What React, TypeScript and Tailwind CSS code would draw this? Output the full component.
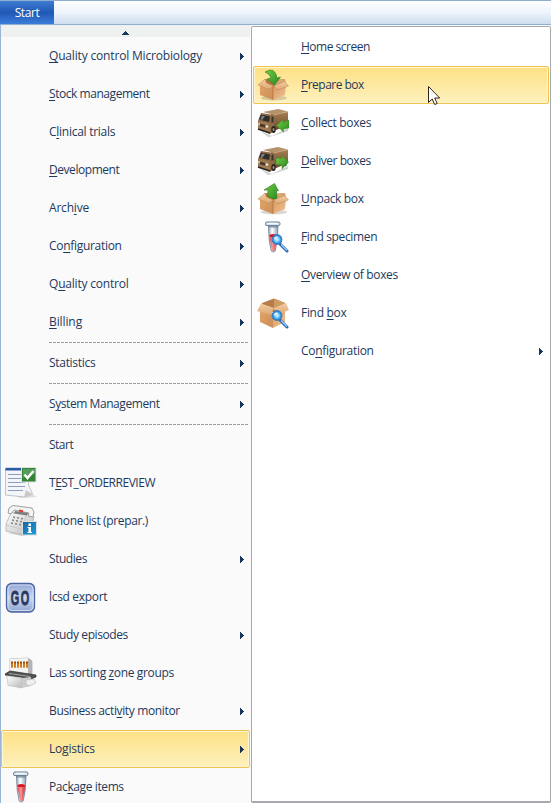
import type { ReactNode } from "react";

type IconName = "order" | "phone" | "go" | "sorter" | "tube" | "pack" | "collect" | "deliver" | "unpack" | "specimen" | "findbox";
type Item = { label: string; icon?: IconName; sub?: boolean; active?: boolean; divider?: boolean; tracking?: string };

// An ampersand precedes the access key of each label.
const mainItems: Item[] = [
  { label: "&Quality control Microbiology", sub: true, tracking: "tracking-[-0.17px]" },
  { label: "&Stock management", sub: true, tracking: "tracking-[-0.45px]" },
  { label: "C&linical trials", sub: true, tracking: "tracking-[-0.27px]" },
  { label: "&Development", sub: true, tracking: "tracking-[-0.45px]" },
  { label: "Arch&ive", sub: true },
  { label: "Co&nfiguration", sub: true, tracking: "tracking-[-0.3px]" },
  { label: "Q&uality control", sub: true },
  { label: "&Billing", sub: true, divider: true, tracking: "tracking-[-0.1px]" },
  { label: "Statistics", sub: true, divider: true, tracking: "tracking-[-0.3px]" },
  { label: "S&ystem Management", sub: true, divider: true, tracking: "tracking-[-0.43px]" },
  { label: "Start", tracking: "tracking-[-0.5px]" },
  { label: "T&EST_ORDERREVIEW", icon: "order", tracking: "tracking-[-0.47px]" },
  { label: "Phone list (prepar.)", icon: "phone", tracking: "tracking-[-0.37px]" },
  { label: "Studies", sub: true, tracking: "tracking-[-0.45px]" },
  { label: "lcsd e&xport", icon: "go", tracking: "tracking-[-0.32px]" },
  { label: "Study episodes", sub: true, tracking: "tracking-[-0.4px]" },
  { label: "Las sorting &zone groups", icon: "sorter", tracking: "tracking-[-0.36px]" },
  { label: "Business acti&vity monitor", sub: true, tracking: "tracking-[-0.36px]" },
  { label: "Lo&gistics", sub: true, active: true },
  { label: "Pac&kage items", icon: "tube", tracking: "tracking-[-0.4px]" },
];

const logisticsItems: Item[] = [
  { label: "&Home screen", tracking: "tracking-[-0.5px]" },
  { label: "&Prepare box", icon: "pack", active: true, tracking: "tracking-[-0.52px]" },
  { label: "&Collect boxes", icon: "collect", tracking: "tracking-[-0.3px]" },
  { label: "&Deliver boxes", icon: "deliver", tracking: "tracking-[-0.45px]" },
  { label: "&Unpack box", icon: "unpack", tracking: "tracking-[-0.35px]" },
  { label: "&Find specimen", icon: "specimen", tracking: "tracking-[-0.36px]" },
  { label: "&Overview of boxes", tracking: "tracking-[-0.35px]" },
  { label: "Find &box", icon: "findbox", tracking: "tracking-[-0.3px]" },
  { label: "Co&nfiguration", sub: true, tracking: "tracking-[-0.3px]" },
];

function Gradients() {
  return (
    <svg className="absolute size-0" aria-hidden="true">
      <defs>
        <linearGradient id="boxL" x1="0" y1="0" x2="1" y2="1"><stop stopColor="#e2a468" /><stop offset="1" stopColor="#c98d56" /></linearGradient>
        <linearGradient id="boxR" x1="0" y1="0" x2="1" y2="1"><stop stopColor="#d89a62" /><stop offset="1" stopColor="#f0c296" /></linearGradient>
        <linearGradient id="flap" x1="0" y1="0" x2="0" y2="1"><stop stopColor="#f3cda3" /><stop offset="1" stopColor="#dda873" /></linearGradient>
        <linearGradient id="green" x1="0" y1="0" x2="1" y2="1"><stop stopColor="#7acb4a" /><stop offset="1" stopColor="#228a1a" /></linearGradient>
        <linearGradient id="truck" x1="0" y1="0" x2="0" y2="1"><stop stopColor="#a37d53" /><stop offset="1" stopColor="#6a4a2b" /></linearGradient>
        <linearGradient id="glass" x1="0" y1="0" x2="1" y2="0"><stop stopColor="#9eb1c3" /><stop offset=".4" stopColor="#fff" /><stop offset="1" stopColor="#8aa0b6" /></linearGradient>
        <linearGradient id="blood" x1="0" y1="0" x2="1" y2="0"><stop stopColor="#e04a50" /><stop offset=".45" stopColor="#fa9495" /><stop offset="1" stopColor="#cb2830" /></linearGradient>
        <radialGradient id="lens"><stop stopColor="#e8fcff" /><stop offset=".55" stopColor="#5fc3f6" /><stop offset="1" stopColor="#1a6fd0" /></radialGradient>
        <linearGradient id="metal" x1="0" y1="0" x2="1" y2="1"><stop stopColor="#fff" /><stop offset="1" stopColor="#b9b9b9" /></linearGradient>
        <linearGradient id="goface" x1="0" y1="0" x2="0" y2="1"><stop stopColor="#8fa5d3" /><stop offset=".5" stopColor="#ccd8ee" /><stop offset="1" stopColor="#8da4d2" /></linearGradient>
        <linearGradient id="info" x1="0" y1="0" x2="1" y2="1"><stop stopColor="#1d629d" /><stop offset="1" stopColor="#19a0df" /></linearGradient>
      </defs>
    </svg>
  );
}

function Box({ children }: { children?: ReactNode }) {
  return (
    <>
      <ellipse cx="17" cy="29" rx="13" ry="2.500" fill="#5c4a36" opacity=".22" />
      <path d="m8 10 10 1 10-1-3 8H8z" fill="#b9763f" />
      <path d="m18 11 10-1 1 4-11 3z" fill="#dba671" />
      {children}
      <path d="m3 16 13 2v13L3 26z" fill="url(#boxL)" />
      <path d="m16 18 13-2-1 10-12 5z" fill="url(#boxR)" />
      <path d="m8 10-7 6 11 4.500 4.500-3.500-7-3z" fill="url(#flap)" stroke="#b07440" strokeWidth=".4" />
      <path d="m16.500 17 11-4.500 4 4.500-11 4z" fill="url(#flap)" stroke="#b07440" strokeWidth=".4" />
      <path d="M16 18v12.500" stroke="#a9642d" strokeWidth=".6" />
    </>
  );
}

function Truck({ children }: { children: ReactNode }) {
  return (
    <>
      <path d="m2 23 13 6 16-8v3l-15 5-5 1z" fill="#444" opacity=".25" />
      <path d="m14 7 17-2v13l-14 6z" fill="url(#truck)" />
      <path d="m6 5 15-3 10 2.500L17 8z" fill="#b4926a" />
      <path d="m17 8 14-3.500" stroke="#d0b28b" strokeWidth=".7" />
      <path d="m4 6 13 2v16l-4 3L1 22v-8z" fill="#8d6b47" />
      <path d="m4 7.500 9 2-1 5.500-10-2.500z" fill="#2f2e2d" />
      <path d="m5 8.500 3 .7-3 3.800-1.500-.4z" fill="#81827e" />
      <path d="m14.500 10 2-.5V15l-2 1z" fill="#39342e" />
      <path d="m1 14 11 2.500 1 9-11.500-3.500z" fill="#a07c55" />
      <path d="m3 16.500 5 1.300v3L3 19.500z" fill="#4b3a2a" />
      <path d="m1.500 17 1 .3m6.500 2 2 .6" stroke="#fff3cf" strokeWidth="2" />
      <path d="m1 22 12 4" stroke="#2b2520" strokeWidth="1.800" />
      <ellipse cx="16.500" cy="22.500" rx="2.200" ry="3.500" fill="#28241f" />
      <ellipse cx="16.500" cy="22.500" rx=".9" ry="1.600" fill="#ae9a83" />
      <ellipse cx="28" cy="18.500" rx="1.800" ry="2.800" fill="#302820" />
      {children}
    </>
  );
}

function Tube() {
  return (
    <>
      <path d="M11.500 5h9.500l-.8 14-2 11q-2 2-4 0l-2-11z" fill="url(#glass)" stroke="#647990" strokeWidth=".8" />
      <path d="M12.500 14h7.500l-.4 5-2 10.500q-1.300 1.300-2.600 0L13 19z" fill="url(#blood)" />
      <ellipse cx="16.200" cy="14.500" rx="3.700" ry="1.600" fill="#d9131f" />
      <rect x="8.500" y="1" width="14.500" height="3.600" rx="1.500" fill="#dbe6f0" stroke="#546c85" strokeWidth=".9" />
      <path d="M11 2.300h9" stroke="#fff" />
      <path d="M12 6h8.500" stroke="#7188a0" />
    </>
  );
}

function Magnifier() {
  return (
    <>
      <path d="m23 23 7 7" stroke="#2b65b2" strokeWidth="3" strokeLinecap="round" />
      <path d="m24 23.500 6 6" stroke="#9bd5ff" strokeWidth="1.100" />
      <circle cx="20" cy="18.500" r="4.800" fill="url(#lens)" stroke="#3c7cc0" strokeWidth="1.200" />
      <path d="M17 18.500q0-3 3-3 2 1-1 2z" fill="#fff" opacity=".85" />
    </>
  );
}

const drawings: Record<IconName, ReactNode> = {
  order: (
    <>
      <path d="m10 29 17-2 5 3-17 1z" fill="#aaa" opacity=".35" />
      <path d="M.5 2h22l1 16 4 9-8 3L.5 28z" fill="#f3f5f9" stroke="#a9adb6" strokeWidth=".7" />
      <path d="m19 30 2-7 6 4q-3 3-8 3z" fill="#c9c9c9" />
      <path d="M.5 3.500V.8H18v2.700z" fill="#2a5ca5" />
      <path d="M3 7.500h13M3 11.500h13M3 15.500h17M3 19.500h17M3 23.500h15" stroke="#8b9ec1" />
      <rect x="16.500" y=".5" width="14.500" height="14.500" fill="#358337" stroke="#dfe3df" />
      <path d="M18 2h12v5q-6 1-12 4z" fill="#69a86c" opacity=".65" />
      <path d="m19.500 7.500 3 3.500 6-7" fill="none" stroke="#fff" strokeWidth="2.500" />
    </>
  ),
  phone: (
    <>
      <path d="m2 28 15 3 12-2-2-3z" fill="#888" opacity=".3" />
      <path d="M6 8 1 19v7l16 4 8-1 4-17-8-5z" fill="url(#metal)" stroke="#a9a9a9" strokeWidth=".7" />
      <path d="m1 20 16 4 4-13" fill="none" stroke="#c8c8c8" />
      <path d="m6 9-3-1 1-5 4-2.500L27 3l2 4-1 5-5-1 1-3-15-3z" fill="#f4f4f4" stroke="#8b8b8b" strokeWidth=".8" />
      <path d="m10 6 13 2-1 2.500L9 8.500z" fill="#7d7e80" />
      <path d="m14 5.500 4 .8" stroke="#e53a30" strokeWidth="2" />
      <path d="m8 12 2 .4m2 .3 2 .4m2 .3 2 .4M7 15l2 .4m2 .3 2 .4m2 .3 2 .4M6 18l2 .4m2 .3 2 .4m2 .3 2 .4" stroke="#858585" strokeWidth="1.500" />
      <rect x="17.500" y="16.500" width="14" height="13.500" fill="url(#info)" stroke="#ddd" />
      <path d="M23.500 18.500h2.500V21h-2.500zm-1 3.500h3.500v5h1v1h-4.500v-1h1v-4h-1z" fill="#fff" />
    </>
  ),
  go: (
    <>
      <rect x="1.500" y="2.500" width="28" height="28.500" rx="5" fill="url(#goface)" stroke="#4c65a0" strokeWidth="1.300" />
      <rect x="3" y="4" width="25" height="25.500" rx="4" fill="none" stroke="#dce6f7" strokeWidth=".8" />
      <g transform="scale(.52 1)">
        <text x="11" y="24.500" letterSpacing="3" fill="#2b395e" stroke="#2b395e" strokeWidth=".9" className="font-['Liberation_Sans',sans-serif] text-[21px] leading-none font-bold">GO</text>
      </g>
    </>
  ),
  sorter: (
    <>
      <path d="m5 2 18-1 4 3v17L5 15z" fill="#d6d6d6" stroke="#a5a5a5" strokeWidth=".7" />
      <path d="m5 2 18-1v16L5 14z" fill="#f2f2f0" />
      <path d="m23 1 4 3v17l-4-4z" fill="#b4b4b4" />
      <path d="M7 4.500v6m3-6v6m3-6v6m3-6v6m3-6v6m3-6v6" stroke="#a24b05" strokeWidth="2" />
      <path d="M7 6.500v4m3-4v4m3-4v4m3-4v4m3-4v4m3-4v4" stroke="#f5ae45" />
      <path d="m0 17 5-3 26 4v2l-5 2-12-2-14-2z" fill="#505153" stroke="#303132" strokeWidth=".7" />
      <path d="m4 16.500 21 3" stroke="#a5a7a8" />
      <path d="m2 19 15 2v10L3 28.500z" fill="url(#metal)" stroke="#bbb" strokeWidth=".6" />
      <path d="m17 21 9-1v9l-9 2z" fill="#ccc" />
      <path d="m21 23 8-1 2 4-7 3-3-2z" fill="#efefef" stroke="#b5b5b5" strokeWidth=".6" />
    </>
  ),
  tube: <Tube />,
  pack: (
    <Box>
      <path d="M8 3q10-6 12 6l3.500-1-6 8-7.500-6 4-1Q13 5 8 3z" fill="url(#green)" stroke="#257a1c" strokeWidth=".6" />
    </Box>
  ),
  unpack: (
    <Box>
      <path d="m7 7 10.500-6.500L21.500 8l-2-.5.500 9-6.500-1.500-3-2 .5-6z" fill="url(#green)" stroke="#257a1c" strokeWidth=".6" />
    </Box>
  ),
  collect: <Truck><path d="m19.500 18.500 6.500-6v3l6-2.500v8l-5.500 1v3z" fill="url(#green)" stroke="#318b24" strokeWidth=".5" /></Truck>,
  deliver: <Truck><path d="m19 13 6 .5v-3l6.500 6.500-6.500 7v-4l-6-.5z" fill="url(#green)" stroke="#318b24" strokeWidth=".5" /></Truck>,
  specimen: <><Tube /><Magnifier /></>,
  findbox: (
    <>
      <path d="m5 6 12-4.500L28 6l-1 9H5z" fill="#b77c48" />
      <path d="m17 1.500 11 4.500-1 9-10-2z" fill="#cf9a64" />
      <path d="m3 13 13 4v14L3 25z" fill="url(#boxL)" />
      <path d="m16 17 12-4v12l-12 6z" fill="url(#boxR)" />
      <path d="M4 6.500 17 11l-3 7-14-4z" fill="url(#flap)" />
      <path d="m17 11 12-5 3 7-12 5z" fill="url(#flap)" />
      <Magnifier />
    </>
  ),
};

function Icon({ name }: { name: IconName }) {
  return <svg viewBox="0 0 32 32" className="size-8">{drawings[name]}</svg>;
}

function Label({ text }: { text: string }) {
  const at = text.indexOf("&");
  if (at < 0) return <span>{text}</span>;
  return (
    <span>
      {text.slice(0, at)}
      <span className="underline decoration-1 underline-offset-[1.5px]">{text[at + 1]}</span>
      {text.slice(at + 2)}
    </span>
  );
}

function MenuRow({ item }: { item: Item }) {
  return (
    <>
      <div className={`flex h-[38px] shrink-0 items-center border pr-[5px] pl-[3px] ${item.active ? "rounded-[2px] border-[#f0c351] bg-linear-to-b from-[#fee183] to-[#fdf0bd] shadow-[inset_0_0_0_1px_#fff5d0]" : "border-transparent"}`}>
        <div className="mr-3 size-8 shrink-0">{item.icon && <Icon name={item.icon} />}</div>
        <div className={`grow whitespace-pre ${item.tracking ?? "tracking-[-0.2px]"}`}><Label text={item.label} /></div>
        {item.sub && <svg viewBox="0 0 4 7" className="mt-px h-[7px] w-1 shrink-0" shapeRendering="crispEdges"><path d="M0 0h1v1h1v1h1v1h1v1H3v1H2v1H1v1H0z" fill="#17365d" /></svg>}
      </div>
      {item.divider && (
        <svg className="mt-px mr-px mb-px ml-12 h-px w-[199px] shrink-0" shapeRendering="crispEdges">
          <path d="M0 .5h199" stroke="#9b9b9b" strokeDasharray="3 1" />
        </svg>
      )}
    </>
  );
}

export default function App() {
  return (
    <div className="relative flex h-[803px] w-[551px] flex-col overflow-hidden bg-[#fafafa] font-['Open_Sans','Noto_Sans',sans-serif] text-[12px] leading-4 tracking-[-0.2px] text-[#1e395b]">
      <Gradients />
      <header className="flex h-[25px] shrink-0 border-y border-[#8faed0] bg-linear-to-b from-white via-[#edf4fb] to-[#cfddee]">
        <div className="flex w-[54px] items-center justify-center bg-linear-to-b from-[#3f7bd2] via-[#2059b5] to-[#3b7cda] tracking-[-0.4px] text-white">Start</div>
      </header>
      <div className="flex min-h-0 grow">
        <nav className="flex w-[251px] shrink-0 flex-col overflow-hidden border-l border-[#9ab5d6] bg-[#fafafa] pr-px">
          <div className="flex h-3 shrink-0 items-center justify-center bg-[#eff0f0] pt-1 pr-0.5">
            <svg viewBox="0 0 8 4" className="h-1 w-2" shapeRendering="crispEdges"><path d="m0 4 4-4 4 4z" fill="#17365d" /></svg>
          </div>
          {mainItems.map((item) => <MenuRow key={item.label} item={item} />)}
        </nav>
        <nav className="mt-px flex w-[300px] flex-col rounded-[2px] border border-b-2 border-[#a5a8ad] bg-white pt-px pr-px pl-px">
          {logisticsItems.map((item) => <MenuRow key={item.label} item={item} />)}
        </nav>
      </div>
      <svg viewBox="0 0 12 20" className="absolute top-[86px] left-[428px] h-5 w-3">
        <path d="M.5.5v16l3.700-3.500 2.500 5.500 2.500-1-2.500-5.500h5z" fill="#fff" stroke="#30251c" />
      </svg>
    </div>
  );
}
